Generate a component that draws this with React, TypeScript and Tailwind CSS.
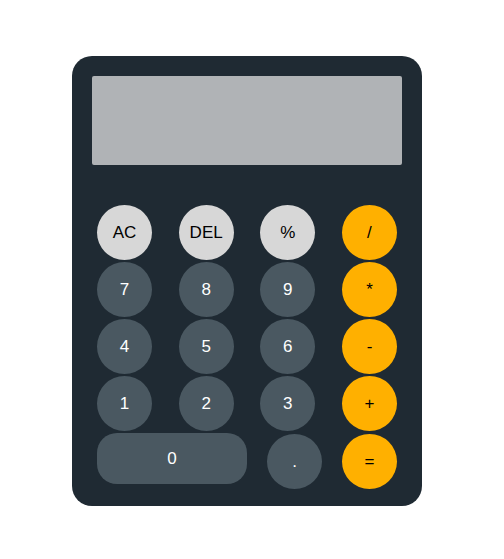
const rows: string[][] = [
  ["AC", "DEL", "%", "/"],
  ["7", "8", "9", "*"],
  ["4", "5", "6", "-"],
  ["1", "2", "3", "+"],
];

function keyStyle(label: string, col: number) {
  if (col === 3) return "bg-[#ffb000] text-black";
  if (["AC", "DEL", "%"].includes(label)) return "bg-[#d7d7d7] text-black";
  return "bg-[#4a5861] text-white";
}

export default function App() {
  return (
    <div className="min-h-screen bg-white pl-[72px] pt-[56px] font-['Liberation_Sans',Arial,sans-serif]">
      <div className="w-[350px] h-[450px] rounded-[20px] bg-[#1f2a33] p-5">
        <div className="h-[89px] w-full rounded-[2px] bg-[#b0b3b6]"></div>
        <div className="mt-[40px] mx-auto w-[300px] flex flex-col gap-[2px]">
          {rows.map((row, r) => (
            <div key={r} className="flex justify-between">
              {row.map((k, c) => (
                <button
                  key={k}
                  className={`w-[55px] h-[55px] rounded-full text-[17px] flex items-center justify-center ${keyStyle(k, c)}`}
                >
                  {k}
                </button>
              ))}
            </div>
          ))}
          <div className="flex justify-between items-start">
            <button className="w-[150px] h-[51px] rounded-[20px] bg-[#4a5861] text-white text-[17px]">
              0
            </button>
            <button className="w-[55px] h-[55px] mt-[1px] rounded-full bg-[#4a5861] text-white text-[17px]">
              .
            </button>
            <button className="w-[55px] h-[55px] mt-[1px] rounded-full bg-[#ffb000] text-black text-[17px]">
              =
            </button>
          </div>
        </div>
      </div>
    </div>
  );
}
